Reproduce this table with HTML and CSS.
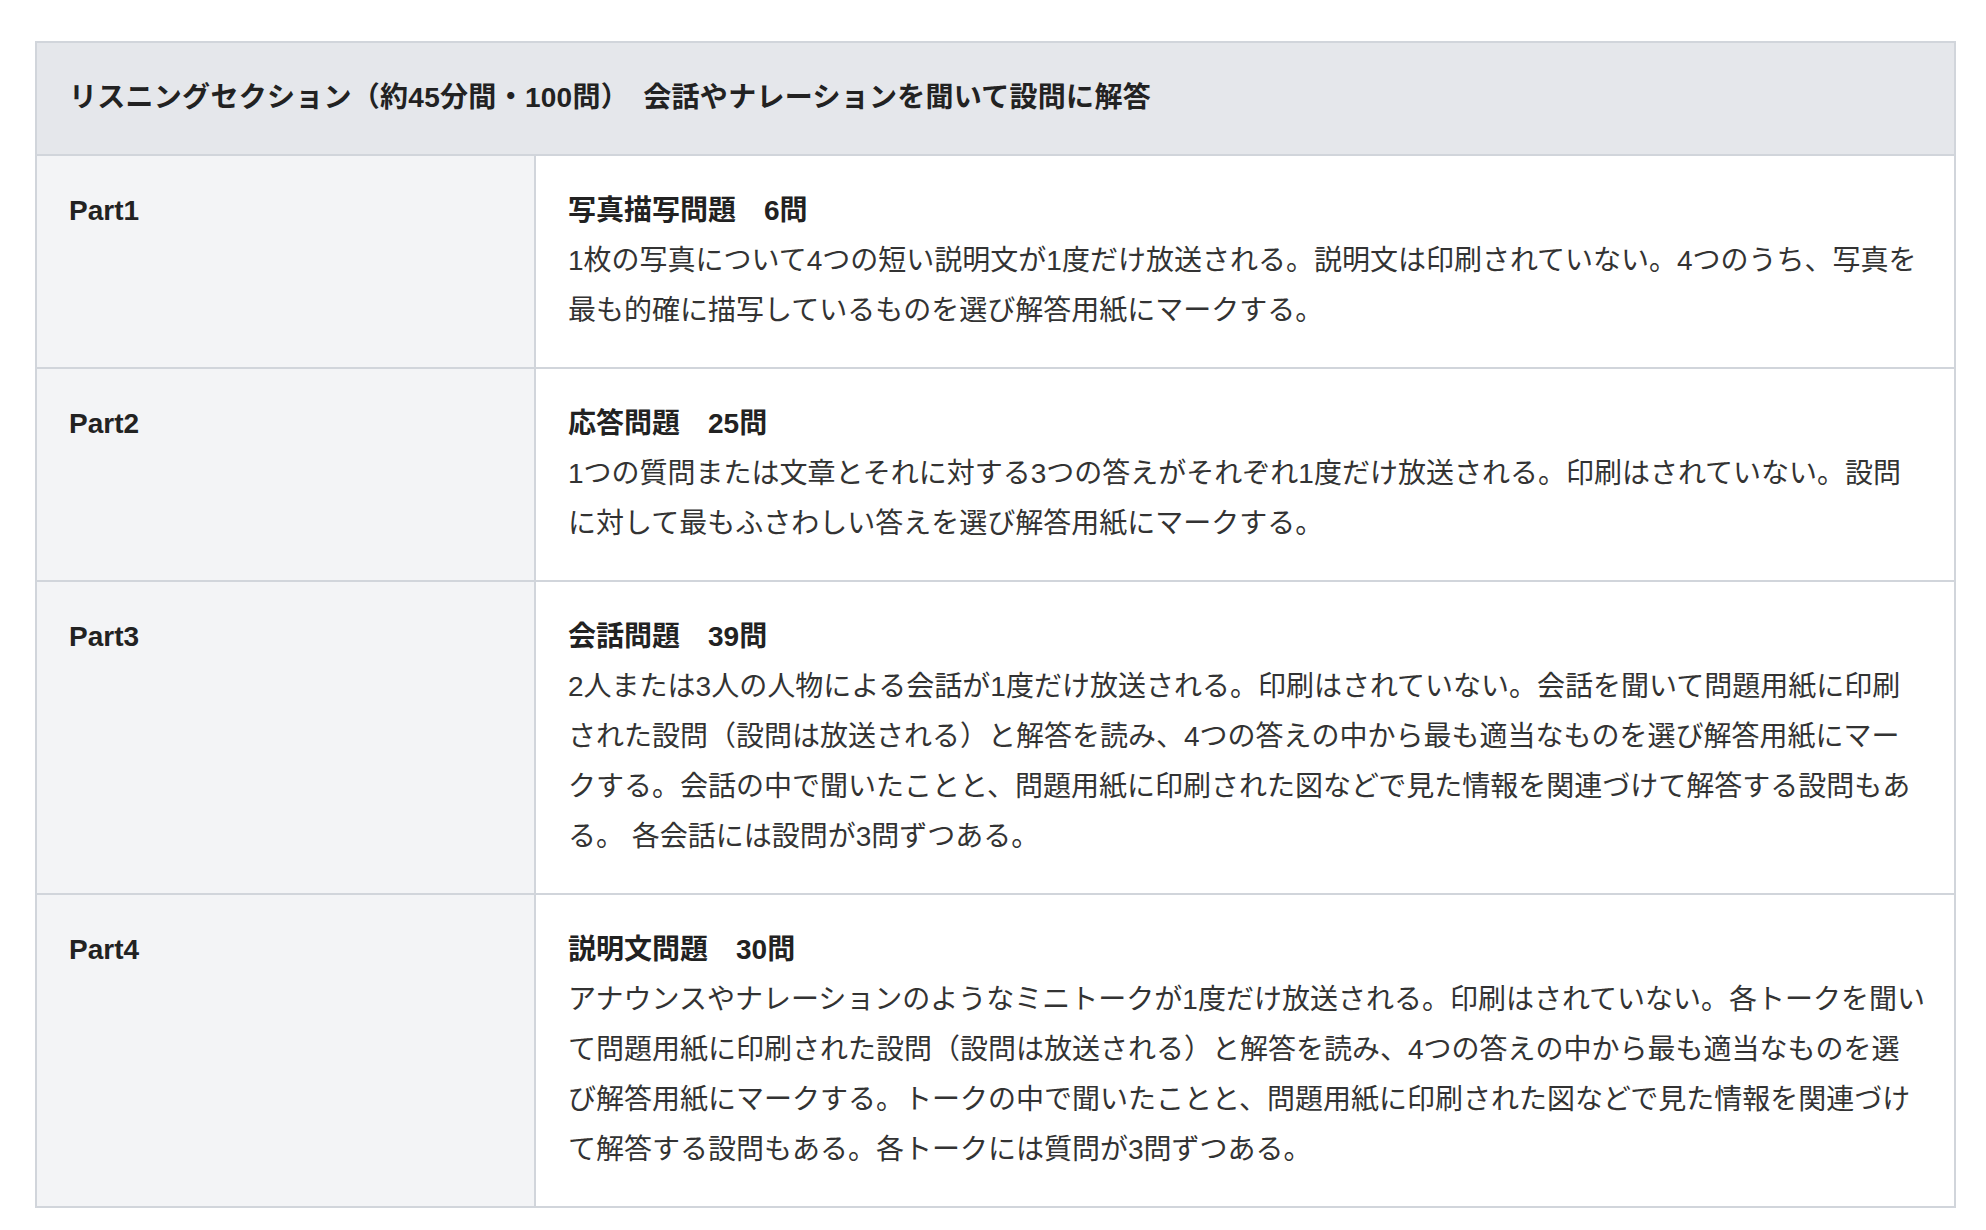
FILE: index.html
```html
<!DOCTYPE html>
<html lang="ja">
<head>
    <meta charset="UTF-8">
    <meta name="viewport" content="width=device-width, initial-scale=1.0">
    <title>リスニングセクション</title>
    <link rel="stylesheet" href="styles.css">
</head>
<body>
    <div class="section">
        <table class="exam-table">
            <thead>
                <tr>
                    <th colspan="2">リスニングセクション（約45分間・100問）　会話やナレーションを聞いて設問に解答</th>
                </tr>
            </thead>
            <tbody>
                <tr>
                    <th class="part">Part1</th>
                    <td>
                        <p class="part-title">写真描写問題　6問</p>
                        <p>1枚の写真について4つの短い説明文が1度だけ放送される。説明文は印刷されていない。4つのうち、写真を<br>最も的確に描写しているものを選び解答用紙にマークする。</p>
                    </td>
                </tr>
                <tr>
                    <th class="part">Part2</th>
                    <td>
                        <p class="part-title">応答問題　25問</p>
                        <p>1つの質問または文章とそれに対する3つの答えがそれぞれ1度だけ放送される。印刷はされていない。設問<br>に対して最もふさわしい答えを選び解答用紙にマークする。</p>
                    </td>
                </tr>
                <tr>
                    <th class="part">Part3</th>
                    <td>
                        <p class="part-title">会話問題　39問</p>
                        <p>2人または3人の人物による会話が1度だけ放送される。印刷はされていない。会話を聞いて問題用紙に印刷<br>された設問（設問は放送される）と解答を読み、4つの答えの中から最も適当なものを選び解答用紙にマー<br>クする。会話の中で聞いたことと、問題用紙に印刷された図などで見た情報を関連づけて解答する設問もあ<br>る。 各会話には設問が3問ずつある。</p>
                    </td>
                </tr>
                <tr>
                    <th class="part">Part4</th>
                    <td>
                        <p class="part-title">説明文問題　30問</p>
                        <p>アナウンスやナレーションのようなミニトークが1度だけ放送される。印刷はされていない。各トークを聞い<br>て問題用紙に印刷された設問（設問は放送される）と解答を読み、4つの答えの中から最も適当なものを選<br>び解答用紙にマークする。トークの中で聞いたことと、問題用紙に印刷された図などで見た情報を関連づけ<br>て解答する設問もある。各トークには質問が3問ずつある。</p>
                    </td>
                </tr>
            </tbody>
        </table>
    </div>
</body>
</html>
```

FILE: styles.css
```css
:root {
    --border-color: #d1d5db;
    --head-background: #e5e7eb;
    --label-background: #f3f4f6;
    --text-color: #333;
    --strong-color: #222;
}

* {
    margin: 0;
    padding: 0;
    box-sizing: border-box;
}

body {
    font-family: 'Liberation Sans', 'Noto Sans CJK JP', sans-serif;
    font-size: 28px;
    line-height: 50px;
    color: var(--text-color);
    background: #fff;
}

.section {
    padding: 41px 30px 22px 35px;
}

.exam-table {
    width: 1921px;
    border-collapse: collapse;
    border: 2px solid var(--border-color);
}

.exam-table th,
.exam-table td {
    padding: 30px 32px 31px;
    border: 2px solid var(--border-color);
    text-align: left;
    vertical-align: top;
}

.exam-table thead th {
    background: var(--head-background);
    color: var(--strong-color);
    font-weight: 700;
    letter-spacing: 0.01em;
}

.exam-table .part {
    width: 499px;
    background: var(--label-background);
    color: var(--strong-color);
    font-weight: 700;
}

/* a little extra room on the right so the longest lines stay on one line */
.exam-table td {
    padding-right: 24px;
    background: #fff;
}

.part-title {
    font-weight: 700;
    color: var(--strong-color);
}
```
